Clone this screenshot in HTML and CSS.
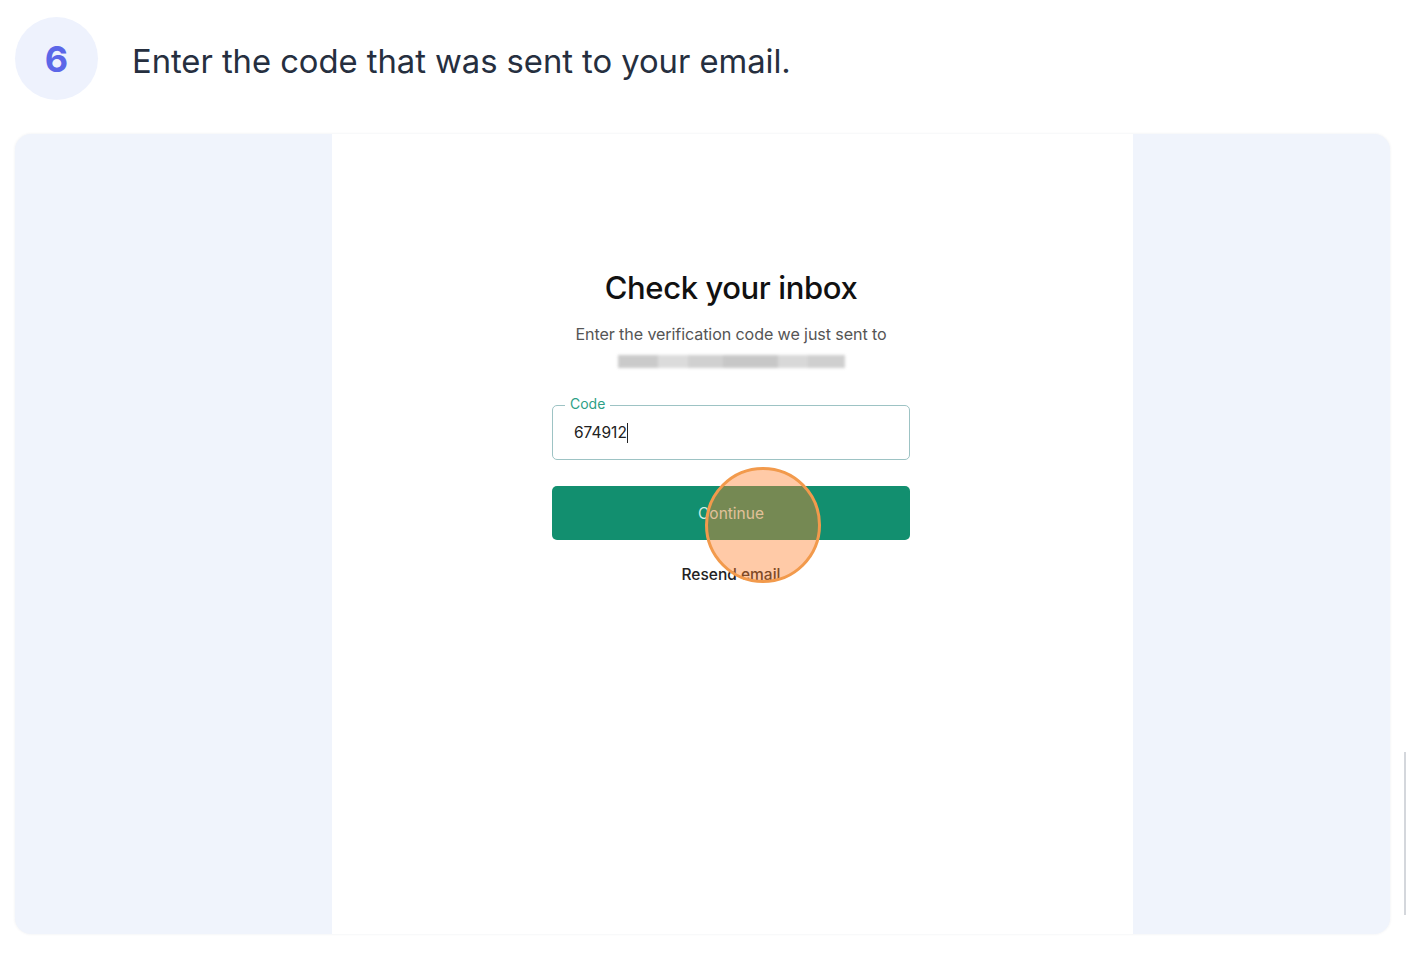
FILE: index.html
```html
<!DOCTYPE html>
<html>
<head>
<meta charset="utf-8">
<link rel="stylesheet" href="styles.css">
</head>
<body>
<div class="page">
  <div class="step">
    <div class="step-num">6</div>
    <div class="step-text">Enter the code that was sent to your email.</div>
  </div>
  <div class="card">
    <div class="shot">
      <div class="form">
        <h1 class="title">Check your inbox</h1>
        <p class="sub">Enter the verification code we just sent to</p>
        <div class="email"><span class="e1"></span><span class="e2"></span><span class="e3"></span><span class="e4"></span><span class="e5"></span><span class="e6"></span></div>
        <div class="field">
          <span class="label">Code</span>
          <span class="value">674912<span class="caret"></span></span>
        </div>
        <div class="btn-wrap">
          <div class="btn">Continue</div>
          <div class="resend">Resend email</div>
          <div class="click"></div>
        </div>
      </div>
    </div>
  </div>
  <div class="edge"></div>
</div>
</body>
</html>
```
FILE: styles.css
```css
html, body {
  margin: 0;
  padding: 0;
  background: #ffffff;
}
.page {
  position: relative;
  width: 1406px;
  height: 960px;
  padding: 17px 0 0 15px;
  box-sizing: border-box;
  font-family: Inter, "Noto Sans", sans-serif;
}
.step {
  display: flex;
  align-items: center;
  height: 83px;
}
.step-num {
  width: 83px;
  height: 83px;
  border-radius: 50%;
  background: #eef2fd;
  color: #5c67e8;
  font-size: 36px;
  font-weight: 700;
  display: flex;
  align-items: center;
  justify-content: center;
}
.step-text {
  margin-left: 34px;
  margin-top: 4px;
  font-size: 32.8px;
  color: #262f3f;
  letter-spacing: -0.05px;
  font-weight: 400;
}
.card {
  margin-top: 34px;
  width: 1375px;
  height: 800px;
  border-radius: 16px;
  background: #f0f4fc;
  box-shadow: 0 0 3px rgba(30, 40, 80, 0.08);
  display: flex;
  justify-content: flex-start;
  overflow: hidden;
}
.shot {
  margin-left: 317px;
  width: 801px;
  height: 100%;
  background: #ffffff;
  display: flex;
  justify-content: center;
}
.form {
  width: 358px;
  margin-right: 3px;
  display: flex;
  flex-direction: column;
  align-items: center;
  padding-top: 134px;
}
.title {
  margin: 0;
  font-size: 31px;
  font-weight: 500;
  color: #111111;
  line-height: 40px;
  letter-spacing: -0.4px;
}
.sub {
  margin: 15px 0 0 0;
  font-size: 16.1px;
  color: #555;
  line-height: 22px;
  letter-spacing: -0.1px;
}
.email {
  margin-top: 10px;
  width: 227px;
  height: 13px;
  display: flex;
  filter: blur(1.8px);
  opacity: 0.7;
}
.email span {
  height: 100%;
}
.e1 { width: 40px; background: #b5b5b5; }
.e2 { width: 30px; background: #cdcdcd; }
.e3 { width: 35px; background: #bdbdbd; }
.e4 { width: 55px; background: #b0b0b0; }
.e5 { width: 30px; background: #c8c8c8; }
.e6 { width: 37px; background: #bcbcbc; }
.field {
  position: relative;
  margin-top: 37px;
  width: 358px;
  height: 55px;
  box-sizing: border-box;
  border: 1.5px solid #9dc3c4;
  border-radius: 5px;
  display: flex;
  align-items: center;
  padding-left: 21px;
}
.label {
  position: absolute;
  left: 12px;
  top: -11px;
  padding: 0 5px;
  background: #ffffff;
  font-size: 14px;
  color: #2e9f86;
  line-height: 18px;
}
.value {
  font-size: 15.5px;
  color: #222;
  display: flex;
  align-items: center;
}
.caret {
  display: inline-block;
  width: 1px;
  height: 20px;
  background: #222;
}
.btn-wrap {
  position: relative;
  margin-top: 26px;
  width: 358px;
  display: flex;
  flex-direction: column;
  align-items: center;
}
.btn {
  width: 100%;
  height: 54px;
  border-radius: 5px;
  background: #128f6f;
  color: #cfeee4;
  font-size: 15.5px;
  display: flex;
  align-items: center;
  justify-content: center;
}
.click {
  position: absolute;
  left: 153px;
  top: -19px;
  width: 110px;
  height: 110px;
  border-radius: 50%;
  border: 3px solid #f29a4c;
  background: rgba(255, 128, 46, 0.42);
}
.resend {
  margin-top: 25px;
  font-size: 15.5px;
  color: #222;
  font-weight: 500;
}
.edge {
  position: absolute;
  left: 1404px;
  top: 752px;
  width: 1.5px;
  height: 163px;
  background: #d4d7dc;
}
```
